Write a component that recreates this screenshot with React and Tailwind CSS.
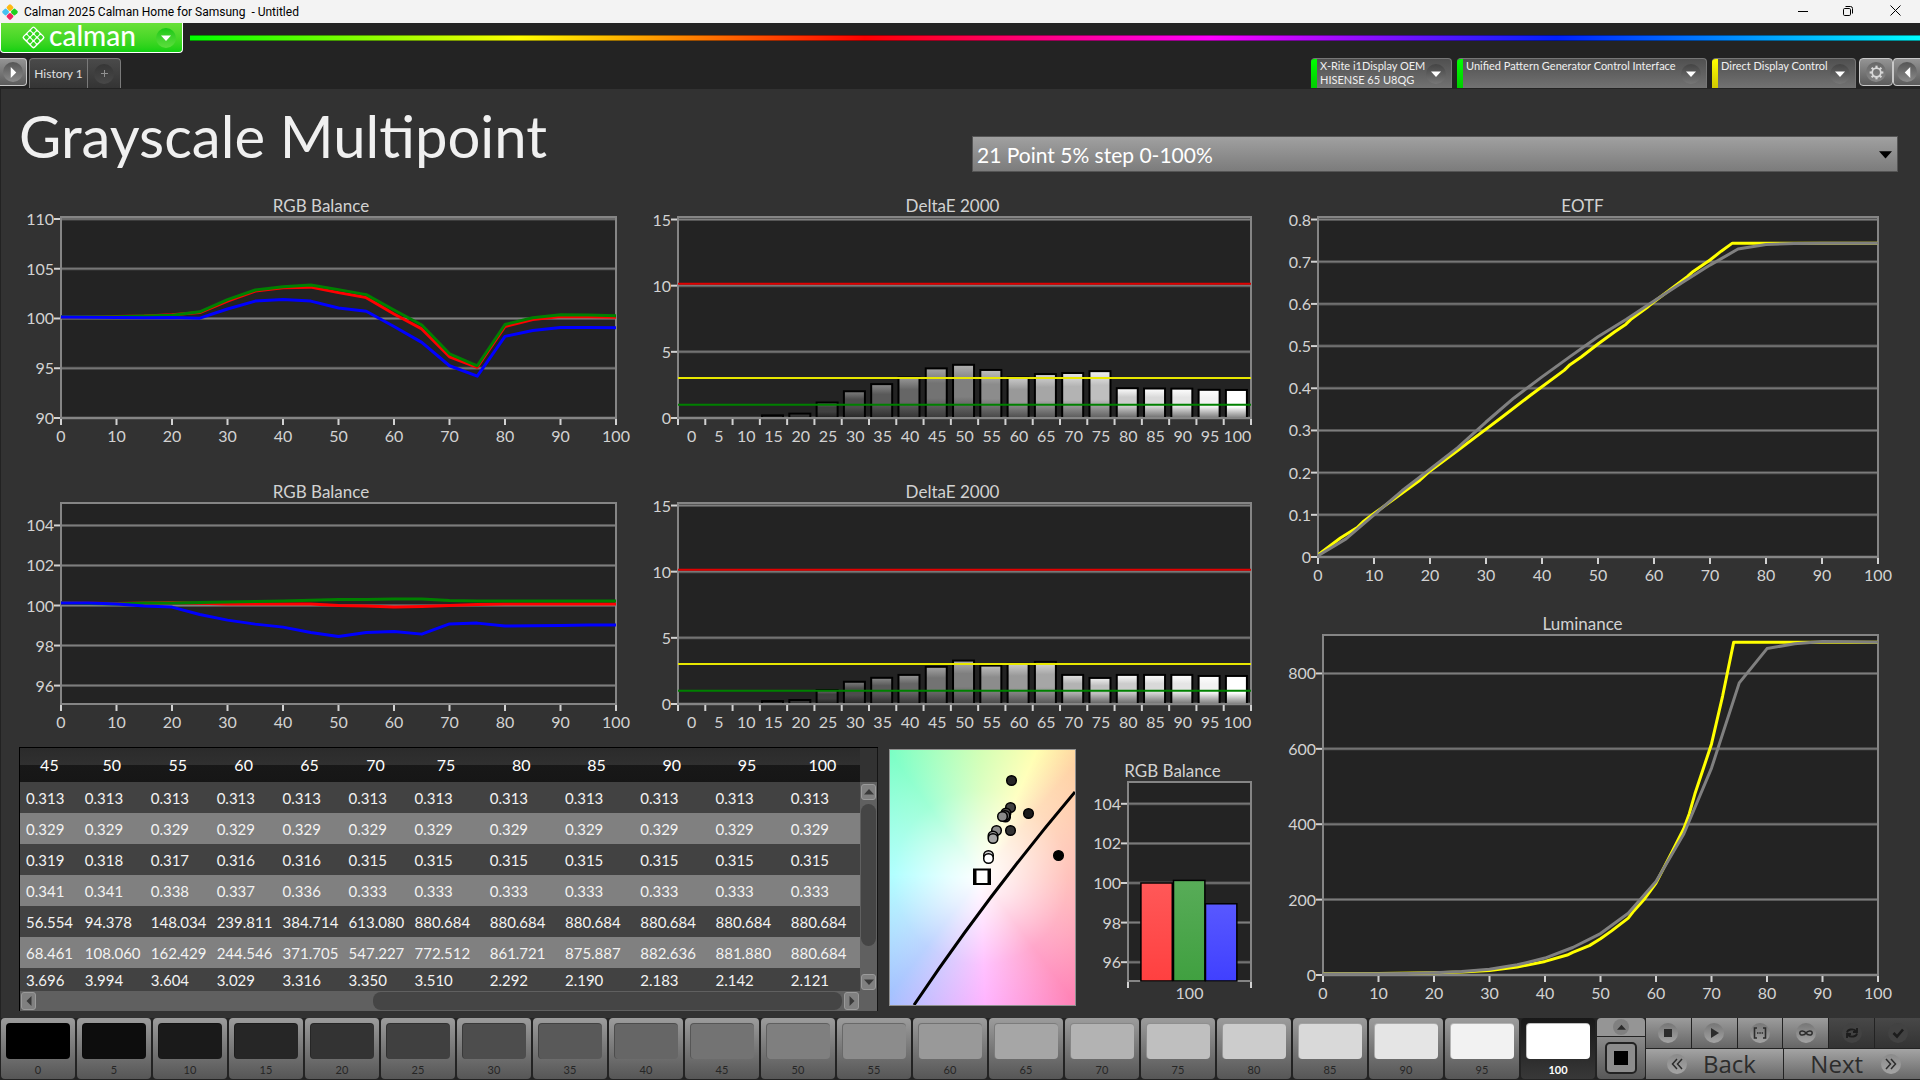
import React from "react";

const STEPS = Array.from({ length: 21 }, (_, i) => i * 5);
const TENS = Array.from({ length: 11 }, (_, i) => i * 10);

/* ---------- chart primitives ---------- */

function ChartFrame({ title, titleClass = "", padClass, plotClass, yTicks, yMin, yMax, xTicks, xLabels, labelY = 24, children }) {
  const py = (v) => `${((yMax - v) / (yMax - yMin)) * 100}%`;
  return (
    <figure className={`flex flex-col ${padClass}`}>
      <figcaption className={`h-5 text-center text-[17px] leading-5 whitespace-nowrap text-[#d2d2d2] ${titleClass}`}>{title}</figcaption>
      <svg className={`mt-px block w-full overflow-visible font-['Lato',sans-serif] text-base ${plotClass}`} role="img" aria-label={title}>
        <rect width="100%" height="100%" fill="#232323" />
        {yTicks.map((t) => (
          <g key={t}>
            <line x1="0" x2="100%" y1={py(t)} y2={py(t)} stroke="#565656" strokeWidth="3" />
            <line x1="0" x2="100%" y1={py(t)} y2={py(t)} stroke="#808080" strokeWidth="1" />
          </g>
        ))}
        <rect width="100%" height="100%" fill="none" stroke="#858585" strokeWidth="2" />
        {children}
        {yTicks.map((t) => (
          <g key={t}>
            <line x1="-7" x2="-1" y1={py(t)} y2={py(t)} stroke="#d2d2d2" strokeWidth="2" />
            <text x="-7" y={py(t)} dy="6" textAnchor="end" fill="#d2d2d2">{t}</text>
          </g>
        ))}
        {xTicks.map((p) => (
          <svg key={p} x={`${p}%`} y="100%" className="overflow-visible">
            <line x1="0" x2="0" y1="1" y2="7" stroke="#d2d2d2" strokeWidth="2" />
          </svg>
        ))}
        {xLabels.map(([p, label]) => (
          <svg key={label} x={`${p}%`} y="100%" className="overflow-visible">
            <text x="0" y={labelY} textAnchor="middle" fill="#d2d2d2">{label}</text>
          </svg>
        ))}
      </svg>
    </figure>
  );
}

function LineChart({ series, yMin, yMax, ...rest }) {
  const points = (pts) => pts.map(([x, y]) => `${x},${((yMax - y) / (yMax - yMin)) * 100}`).join(" ");
  return (
    <ChartFrame {...rest} yMin={yMin} yMax={yMax} xTicks={TENS} xLabels={TENS.map((t) => [t, t])}>
      <svg width="100%" height="100%" viewBox="0 0 100 100" preserveAspectRatio="none">
        {series.map((s) => (
          <polyline key={s.color} points={points(s.data)} fill="none" stroke={s.color} strokeWidth="3" strokeLinejoin="round" vectorEffect="non-scaling-stroke" />
        ))}
      </svg>
    </ChartFrame>
  );
}

function DeltaChart({ id, values }) {
  const yMax = 15.19;
  const cell = 100 / 21;
  const py = (v) => (1 - v / yMax) * 100;
  return (
    <ChartFrame
      title="DeltaE 2000"
      padClass="pl-6"
      titleClass="-ml-6"
      plotClass="h-[201px]"
      yTicks={[15, 10, 5, 0]}
      yMin={0}
      yMax={yMax}
      xTicks={Array.from({ length: 22 }, (_, i) => i * cell)}
      xLabels={STEPS.map((s, i) => [(i + 0.5) * cell, s])}
    >
      <defs>
        {STEPS.map((s) => {
          const g = Math.round(s * 2.55);
          const hi = Math.min(255, g + 50);
          return (
            <linearGradient key={s} id={`${id}-${s}`} x1="0" y1="0" x2="0" y2="1">
              <stop offset="0" stopColor={`rgb(${hi},${hi},${hi})`} />
              <stop offset="0.3" stopColor={`rgb(${g},${g},${g})`} />
              <stop offset="0.6" stopColor={`rgb(${g},${g},${g})`} />
              <stop offset="1" stopColor={`rgb(${g >> 1},${g >> 1},${g >> 1})`} />
            </linearGradient>
          );
        })}
      </defs>
      {values.map((v, i) =>
        v > 0 ? (
          <rect key={STEPS[i]} x={`${(i + 0.08) * cell}%`} y={`${py(v)}%`} width={`${cell * 0.77}%`} height={`${(v / yMax) * 100}%`} fill={`url(#${id}-${STEPS[i]})`} stroke="#000" strokeWidth="2" />
        ) : null
      )}
      <line x1="0" x2="100%" y1="100%" y2="100%" stroke="#858585" strokeWidth="2" />
      {[[10.15, "#e00000"], [3.02, "#e8e800"], [1, "#008000"]].map(([v, c]) => (
        <line key={c} x1="0" x2="100%" y1={`${py(v)}%`} y2={`${py(v)}%`} stroke={c} strokeWidth="2" />
      ))}
    </ChartFrame>
  );
}

function MiniBalance() {
  const yMin = 95.05;
  const yMax = 105.1;
  const bars = [
    ["#ff4040", "#ff5858", 100, 10.5],
    ["#40a040", "#58ac58", 100.13, 37],
    ["#4040ff", "#5858ff", 98.95, 63],
  ];
  return (
    <ChartFrame title="RGB Balance" padClass="w-full pl-[34px]" titleClass="-ml-[34px]" plotClass="h-[199px]" yTicks={[104, 102, 100, 98, 96]} yMin={yMin} yMax={yMax} xTicks={[0, 100]} xLabels={[[50, 100]]} labelY={18}>
      <defs>
        {bars.map(([a, b, v]) => (
          <linearGradient key={a} id={`bar${v}`} x1="0" y1="0" x2="0" y2="1">
            <stop offset="0" stopColor={b} />
            <stop offset="1" stopColor={a} />
          </linearGradient>
        ))}
      </defs>
      {bars.map(([a, b, v, x]) => (
        <rect key={a} x={`${x}%`} y={`${((yMax - v) / (yMax - yMin)) * 100}%`} width="25.5%" height={`${((v - yMin) / (yMax - yMin)) * 100}%`} fill={`url(#bar${v})`} stroke="#000" strokeWidth="1.5" />
      ))}
    </ChartFrame>
  );
}

/* ---------- data ---------- */

const onSteps = (arr) => arr.map((v, i) => [i * 5, v]);

const BALANCE_TOP = [
  { color: "#ff0000", data: onSteps([100.15, 100.17, 100.2, 100.25, 100.38, 100.6, 101.75, 102.75, 103.1, 103.15, 102.6, 102.1, 100.45, 98.95, 96.15, 95.1, 99.2, 99.9, 100.2, 100.18, 100.13]) },
  { color: "#008000", data: onSteps([100.17, 100.17, 100.18, 100.25, 100.33, 100.67, 101.9, 102.86, 103.2, 103.37, 102.9, 102.4, 100.85, 99.35, 96.45, 95.25, 99.4, 100.07, 100.37, 100.34, 100.27]) },
  { color: "#0000ff", data: onSteps([100.15, 100.13, 100.1, 100.08, 100.1, 100.03, 100.95, 101.75, 101.9, 101.75, 101.05, 100.73, 99.2, 97.6, 95.25, 94.2, 98.2, 98.8, 99.1, 99.1, 99.06]) },
];

const BALANCE_BOTTOM = [
  { color: "#ff0000", data: onSteps([100.12, 100.11, 100.1, 100.12, 100.15, 100.11, 100.08, 100.08, 100.07, 100.07, 100, 99.97, 99.93, 99.95, 100, 100.05, 100.07, 100.07, 100.07, 100.07, 100.07]) },
  { color: "#008000", data: onSteps([100.12, 100.1, 100.08, 100.12, 100.12, 100.15, 100.18, 100.2, 100.22, 100.26, 100.3, 100.3, 100.32, 100.32, 100.25, 100.22, 100.22, 100.22, 100.22, 100.22, 100.22]) },
  { color: "#0000ff", data: onSteps([100.12, 100.12, 100.08, 99.98, 99.92, 99.55, 99.27, 99.07, 98.92, 98.65, 98.45, 98.65, 98.7, 98.57, 99.08, 99.12, 98.98, 98.99, 99, 99.03, 99.03]) },
];

const DELTA_TOP = [0, 0, 0, 0.2, 0.33, 1.17, 2.02, 2.56, 3.06, 3.75, 4.02, 3.63, 3.06, 3.32, 3.4, 3.54, 2.25, 2.23, 2.22, 2.13, 2.12];
const DELTA_BOTTOM = [0, 0, 0, 0.22, 0.3, 1.05, 1.68, 1.98, 2.2, 2.81, 3.28, 2.9, 3.04, 3.18, 2.2, 1.97, 2.2, 2.2, 2.2, 2.12, 2.12];

const EOTF = [
  { color: "#ffff00", data: [[0, 0.005], [4, 0.045], [7, 0.07], [8, 0.083], [10, 0.103], [18, 0.18], [20, 0.204], [25, 0.253], [29, 0.293], [33, 0.333], [38, 0.384], [44, 0.443], [45, 0.456], [47, 0.474], [50, 0.505], [53, 0.534], [55, 0.552], [56, 0.565], [59, 0.594], [60, 0.605], [66, 0.665], [67, 0.677], [70, 0.704], [72, 0.725], [74, 0.744], [100, 0.744]] },
  { color: "#808080", data: onSteps([0.003, 0.043, 0.1, 0.157, 0.208, 0.26, 0.32, 0.377, 0.427, 0.475, 0.522, 0.563, 0.607, 0.65, 0.692, 0.73, 0.741, 0.743, 0.744, 0.744, 0.744]) },
];

const LUMINANCE = [
  { color: "#ffff00", data: [[0, 4], [10, 4], [20, 6], [25, 8], [30, 12], [35, 21], [40, 36], [44, 53], [45, 60], [48, 78], [50, 96], [52, 117], [55, 151], [56, 170], [58, 203], [60, 244], [63, 330], [65, 388], [66, 428], [67, 480], [70, 613], [72, 740], [74, 883], [100, 883]] },
  { color: "#808080", data: onSteps([3, 3, 3, 4, 6, 9, 15, 27, 45, 73, 110, 164, 248, 374, 549, 775, 866, 879, 885, 884, 883]) },
];

const TABLE_HEAD = [45, 50, 55, 60, 65, 70, 75, 80, 85, 90, 95, 100];
const TABLE_ROWS = [
  Array(12).fill("0.313"),
  Array(12).fill("0.329"),
  ["0.319", "0.318", "0.317", "0.316", "0.316", "0.315", "0.315", "0.315", "0.315", "0.315", "0.315", "0.315"],
  ["0.341", "0.341", "0.338", "0.337", "0.336", "0.333", "0.333", "0.333", "0.333", "0.333", "0.333", "0.333"],
  ["56.554", "94.378", "148.034", "239.811", "384.714", "613.080", "880.684", "880.684", "880.684", "880.684", "880.684", "880.684"],
  ["68.461", "108.060", "162.429", "244.546", "371.705", "547.227", "772.512", "861.721", "875.887", "882.636", "881.880", "880.684"],
  ["3.696", "3.994", "3.604", "3.029", "3.316", "3.350", "3.510", "2.292", "2.190", "2.183", "2.142", "2.121"],
];

/* ---------- small pieces ---------- */

function Triangle({ dir, className = "", size = 10 }) {
  const d = { down: "M0 2.5h10L5 8z", up: "M0 7.5h10L5 2z", left: "M7.5 0v10L2.5 5z", right: "M2.5 0v10L7.5 5z" }[dir];
  return (
    <svg width={size} height={size} viewBox="0 0 10 10" className={className} aria-hidden="true">
      <path d={d} fill="currentColor" />
    </svg>
  );
}

function Knob({ children, className = "" }) {
  return <span className={`flex size-5 shrink-0 items-center justify-center rounded-full ${className}`}>{children}</span>;
}

function TitleBar() {
  return (
    <div className="flex h-[23px] items-center bg-[#f3f3f3] text-black">
      <svg width="16" height="16" viewBox="0 0 16 16" className="ml-0.5" aria-hidden="true">
        <rect x="5.2" y="0.8" width="5.6" height="5.6" rx="1.6" transform="rotate(45 8 3.6)" fill="#fdb913" />
        <rect x="0.8" y="5.2" width="5.6" height="5.6" rx="1.6" transform="rotate(45 3.6 8)" fill="#45c1f0" />
        <rect x="9.6" y="5.2" width="5.6" height="5.6" rx="1.6" transform="rotate(45 12.4 8)" fill="#1fd11f" />
        <rect x="5.2" y="9.6" width="5.6" height="5.6" rx="1.6" transform="rotate(45 8 12.4)" fill="#f0245f" />
      </svg>
      <span className="ml-1.5 whitespace-pre font-['Roboto',sans-serif] text-xs">Calman 2025 Calman Home for Samsung  - Untitled</span>
      <div className="ml-auto flex h-full">
        <button aria-label="Minimize" className="flex w-[45px] items-center justify-center">
          <svg width="10" height="10" viewBox="0 0 10 10"><path d="M0 4.5h10" stroke="#000" /></svg>
        </button>
        <button aria-label="Restore" className="flex w-[45px] items-center justify-center pb-0.5">
          <svg width="10" height="10" viewBox="0 0 10 10" fill="none" stroke="#000"><rect x="0.5" y="2.5" width="7" height="7" rx="1.2" /><path d="M2.5 0.5h5a2 2 0 0 1 2 2v5" /></svg>
        </button>
        <button aria-label="Close" className="flex w-[50px] items-center justify-center pb-0.5">
          <svg width="11" height="11" viewBox="0 0 11 11"><path d="M0.5 0.5l10 10M10.5 0.5l-10 10" stroke="#000" /></svg>
        </button>
      </div>
    </div>
  );
}

function LogoRow() {
  return (
    <div className="flex h-[30px] items-start">
      <button className="flex h-[30px] w-[183px] items-center rounded-b-[4px] border border-t-0 border-white bg-linear-to-b from-[#68e038] to-[#0cd010] text-white">
        <svg width="25" height="25" viewBox="0 0 24 24" className="ml-5" aria-hidden="true">
          <rect x="4" y="4" width="16" height="16" rx="2" transform="rotate(45 12 12)" fill="#fff" />
          <g fill="#35d620" transform="rotate(45 12 12)">
            {[5.2, 10, 14.8].map((x) => [5.2, 10, 14.8].map((y) => <rect key={`${x}-${y}`} x={x} y={y} width="3.8" height="3.8" rx="1" />))}
          </g>
        </svg>
        <span className="ml-[3px] pb-1.5 font-['Lato',sans-serif] text-[28px] leading-6 font-medium">calman</span>
        <Knob className="mr-1.5 ml-auto bg-linear-to-b from-[#14c814] to-[#5ade3c]"><Triangle dir="down" /></Knob>
      </button>
      <div className="mt-3 ml-[7px] h-1.5 flex-1 border-y border-black/40 bg-[linear-gradient(to_right,#00ff00,#ffff00_19%,#ff0000_39%,#ff00ff_59%,#0020ff_79%,#00ffff)]" />
    </div>
  );
}

function DevicePill({ barClass, widthClass, lines }) {
  return (
    <button className={`flex h-[30px] shrink-0 items-start overflow-hidden rounded-t-[4px] border-t border-r border-[#777] bg-linear-to-b from-[#505050] to-[#727272] text-left text-[#f0f0f0] ${widthClass}`}>
      <span className={`h-full w-1.5 shrink-0 ${barClass}`} />
      <span className="ml-[3px] flex-1 font-['Lato',sans-serif] text-[11px] leading-[14px] whitespace-nowrap">
        {lines.map((l) => <span key={l} className="block">{l}</span>)}
      </span>
      <Knob className="mt-[5px] mr-[5px] -ml-6 bg-linear-to-b from-[#444] to-[#777] text-white"><Triangle dir="down" /></Knob>
    </button>
  );
}

const SIDE_BTN = "flex h-7 shrink-0 items-center justify-center border border-[#c8c8c8] bg-linear-to-b from-[#949494] to-[#5c5c5c] text-white";

function TabRow() {
  return (
    <div className="mt-[5px] flex h-[31px] items-start">
      <button aria-label="Expand" className={`${SIDE_BTN} w-[27px] rounded-r-[4px] border-l-0`}>
        <Knob className="bg-linear-to-b from-[#555] to-[#8c8c8c]"><Triangle dir="right" size={11} /></Knob>
      </button>
      <div className="ml-0.5 flex h-[30px] overflow-hidden rounded-t-[4px] border border-b-0 border-[#7a7a7a] bg-linear-to-b from-[#4a4a4a] to-[#343434]">
        <button className="w-[58px] border-r border-[#7a7a7a] text-xs whitespace-nowrap text-[#e0e0e0]">History 1</button>
        <button aria-label="Add history" className="flex w-8 items-center justify-center">
          <Knob className="bg-linear-to-b from-[#363636] to-[#484848] text-[#909090]">
            <svg width="7" height="7" viewBox="0 0 7 7"><path d="M3.5 0v7M0 3.5h7" stroke="currentColor" /></svg>
          </Knob>
        </button>
      </div>
      <div className="ml-auto flex gap-[5px]">
        <DevicePill barClass="bg-linear-to-b from-[#00ff00] to-[#00cc00]" widthClass="w-[141px]" lines={["X-Rite i1Display OEM", "HISENSE 65 U8QG"]} />
        <DevicePill barClass="bg-linear-to-b from-[#00ff00] to-[#00cc00]" widthClass="w-[250px]" lines={["Unified Pattern Generator Control Interface"]} />
        <DevicePill barClass="bg-linear-to-b from-[#ffff00] to-[#d0c800]" widthClass="w-[144px]" lines={["Direct Display Control"]} />
      </div>
      <button aria-label="Settings" className={`${SIDE_BTN} ml-[3px] w-[34px] rounded-[4px]`}>
        <Knob className="bg-linear-to-b from-[#666] to-[#888] text-[#d8d8d8]">
          <svg width="15" height="15" viewBox="0 0 14 14" fill="none" stroke="currentColor">
            <circle cx="7" cy="7" r="4" strokeWidth="1.6" />
            {[0, 45, 90, 135, 180, 225, 270, 315].map((a) => <path key={a} d="M7 0.6v2.2" strokeWidth="2" transform={`rotate(${a} 7 7)`} />)}
          </svg>
        </Knob>
      </button>
      <button aria-label="Collapse" className={`${SIDE_BTN} w-[27px] rounded-l-[4px] border-r-0`}>
        <Knob className="bg-linear-to-b from-[#555] to-[#8c8c8c]"><Triangle dir="left" size={11} /></Knob>
      </button>
    </div>
  );
}

const SCROLL_BTN = "flex items-center justify-center rounded-[3px] border border-[#9a9a9a] bg-[#808080] text-[#3a3a3a]";

function DataTable() {
  return (
    <div className="grid min-w-0 flex-1 grid-cols-[1fr_18px] border-t border-l border-black">
      <div className="h-[243px] overflow-hidden">
        <table className="w-full table-fixed border-collapse text-base">
          <colgroup>
            <col className="w-[7%]" />
            {[0, 1, 2, 3, 4].map((i) => <col key={i} className="w-[7.85%]" />)}
            {[0, 1, 2, 3, 4, 5].map((i) => <col key={i} />)}
          </colgroup>
          <thead>
            <tr className="h-[34px] bg-[linear-gradient(to_bottom,#2b2b2b,#303030_50%,#181818_50%,#161616)] text-white">
              {TABLE_HEAD.map((h) => <th key={h} scope="col" className="p-0 text-center font-normal">{h}</th>)}
            </tr>
          </thead>
          <tbody>
            {TABLE_ROWS.map((row, r) => (
              <tr key={r} className="h-[31px] text-[#f2f2f2] odd:bg-[#424242] even:bg-[#808080] last:h-[23px]">
                {row.map((c, i) => <td key={i} className="p-0 pt-px pl-[6px] text-[15px] leading-[18px] whitespace-nowrap">{c}</td>)}
              </tr>
            ))}
          </tbody>
        </table>
      </div>
      <div className="flex flex-col border-r border-[#151515] pt-[34px]">
        <div className="flex flex-1 flex-col bg-[#606060] px-px pt-0.5 pb-px">
          <button aria-label="Scroll up" className={`${SCROLL_BTN} h-4`}><Triangle dir="up" /></button>
          <div className="mt-1 h-[142px] rounded-full bg-[#454545]" />
          <button aria-label="Scroll down" className={`${SCROLL_BTN} mt-auto h-4`}><Triangle dir="down" /></button>
        </div>
      </div>
      <div className="flex h-5 bg-[#606060] p-px">
        <button aria-label="Scroll left" className={`${SCROLL_BTN} w-[15px]`}><Triangle dir="left" /></button>
        <div className="mr-0.5 ml-auto w-[56%] rounded-lg bg-[#454545]" />
        <button aria-label="Scroll right" className={`${SCROLL_BTN} w-[15px]`}><Triangle dir="right" /></button>
      </div>
      <div className="border-r border-[#151515] bg-[#606060]" />
    </div>
  );
}

function ChromaChart() {
  const dots = [
    [169.5, 106.5, "#000"], [139.5, 64.5, "#1a1a1a"], [122.5, 31.5, "#262626"], [121.5, 81.5, "#333"], [121.5, 58.5, "#404040"],
    [117, 64, "#4a4a4a"], [116.5, 68, "#5a5a5a"], [116, 66.5, "#666"], [113.5, 67.5, "#8a8a8a"], [107.5, 81.5, "#8c8c8c"],
    [104, 87, "#999"], [104, 89.5, "#a6a6a6"], [99.5, 106.5, "#d0d0d0"], [99.5, 109.5, "#fff"],
  ];
  return (
    <div className="mt-0.5 ml-[11px] h-[257px] w-[187px] shrink-0 border border-[#909090] bg-[radial-gradient(circle_at_49%_50%,#fff_0%,rgba(255,255,255,0.75)_22%,rgba(255,255,255,0.3)_55%,transparent_100%),conic-gradient(from_0deg_at_49%_50%,#ccffaa_0deg,#ffffaa_24deg,#ffd0a0_40deg,#ffa8a0_90deg,#ff80b4_143deg,#ffa8ff_178deg,#a0c0ff_218deg,#90ffff_272deg,#78ffc4_324deg,#ccffaa_360deg)]">
      <svg viewBox="0 0 185 255" preserveAspectRatio="none" className="block size-full" role="img" aria-label="Chromaticity">
        <path d="M24 255Q98 145 185 42" fill="none" stroke="#000" strokeWidth="3" />
        {dots.map(([x, y, c]) => <circle key={`${x}-${y}`} cx={x - 1} cy={y - 1} r="4.8" fill={c} stroke="#000" strokeWidth="1.5" />)}
        <path d="M83 118.500h18v16.500h-18z" fill="#000" />
        <path d="M86.500 120.500h11v12.500h-11z" fill="#fff" />
      </svg>
    </div>
  );
}

function Swatch({ level, active }) {
  const g = Math.round(level * 2.55);
  return (
    <button
      className={`flex h-[61px] min-w-0 flex-1 flex-col items-center rounded-[4px] px-1 pt-[5px] ${
        active ? "bg-linear-to-b from-[#181818] to-[#383838] font-bold text-white" : "bg-linear-to-b from-[#9c9c9c] to-[#565656] text-[#262626]"
      }`}
    >
      <span className="h-9 w-full max-w-16 rounded-[4px] border-t border-l border-black/25" style={{ backgroundColor: `rgb(${g},${g},${g})` }} />
      <span className="mt-1 text-[11px] leading-[14px]">{level}</span>
    </button>
  );
}

const TRANSPORT = [
  ["Stop", <path key="p" d="M3 3h8v8H3z" fill="currentColor" />],
  ["Play", <path key="p" d="M4 2l8 5-8 5z" fill="currentColor" />],
  ["Read series", <path key="p" d="M4 2H1.500v10H4M10 2h2.500v10H10M4 7h1.500M6.300 7h1.500M8.600 7h1.500" stroke="currentColor" strokeWidth="1.600" fill="none" />],
  ["Continuous", <path key="p" d="M7 7C5.500 4.500 0.800 4 0.800 7S5.500 9.500 7 7s6.200-3 6.200 0S8.500 9.500 7 7z" stroke="currentColor" strokeWidth="1.500" fill="none" />],
  ["Refresh", <path key="p" d="M2 6.500C2.500 3.500 8 2 11 5M12 2v4H8M12 7.500C11.500 10.500 6 12 3 9M2 12V8h4" stroke="currentColor" strokeWidth="1.800" fill="none" />],
  ["Accept", <path key="p" d="M2.500 7l3.500 3.500L12 3.500" stroke="currentColor" strokeWidth="2.600" fill="none" />],
];

function Chevrons({ flip }) {
  return (
    <svg width="12" height="12" viewBox="0 0 12 12" className={flip ? "rotate-180" : ""} aria-hidden="true">
      <path d="M6 1L1.500 6 6 11M11 1L6.500 6 11 11" fill="none" stroke="#2c2c2c" strokeWidth="1.500" />
    </svg>
  );
}

function BottomBar() {
  const half = "flex h-[30px] flex-1 items-center bg-linear-to-b from-[#a4a4a4] to-[#686868] font-['Open_Sans',sans-serif] text-[24px] leading-[30px] font-medium text-[#2c2c2c]";
  return (
    <footer className="flex bg-[#232323] pb-px pl-px">
      <div className="flex min-w-0 flex-1 gap-0.5">
        {STEPS.map((s) => <Swatch key={s} level={s} active={s === 100} />)}
      </div>
      <div className="ml-0.5 flex w-12 shrink-0 flex-col gap-px">
        <button aria-label="Show options" className="flex h-[18px] items-center justify-center rounded-t-[4px] bg-[#959595]">
          <span className="flex size-4 items-center justify-center rounded-full bg-[#808080] text-[#2c2c2c]"><Triangle dir="up" size={9} /></span>
        </button>
        <button aria-label="Pattern window" className="flex flex-1 items-center justify-center rounded-b-[4px] bg-linear-to-b from-[#8a8a8a] to-[#585858]">
          <span className="flex size-8 items-center justify-center rounded-[5px] border-2 border-[#222] bg-[#8c8c8c]">
            <span className="size-3.5 bg-black" />
          </span>
        </button>
      </div>
      <div className="ml-px flex w-[274px] shrink-0 flex-col gap-px">
        <div className="flex gap-px">
          {TRANSPORT.map(([name, icon], i) => (
            <button key={name} aria-label={name} disabled={i > 3} className={`flex h-[30px] flex-1 items-center justify-center ${i > 3 ? "bg-linear-to-b from-[#484848] to-[#333] text-[#1c1c1c]" : "bg-linear-to-b from-[#9c9c9c] to-[#666] text-[#2c2c2c]"}`}>
              <Knob className={i > 3 ? "bg-[#424242]" : "bg-linear-to-b from-[#767676] to-[#a4a4a4]"}>
                <svg width="14" height="14" viewBox="0 0 14 14">{icon}</svg>
              </Knob>
            </button>
          ))}
        </div>
        <div className="flex gap-px">
          <button className={half}>
            <Knob className="ml-[21px] bg-linear-to-b from-[#8a8a8a] to-[#a4a4a4]"><Chevrons /></Knob>
            <span className="ml-4">Back</span>
          </button>
          <button className={`${half} justify-end`}>
            <span className="mr-[18px]">Next</span>
            <Knob className="mr-[19px] bg-linear-to-b from-[#8a8a8a] to-[#a4a4a4]"><Chevrons flip /></Knob>
          </button>
        </div>
      </div>
    </footer>
  );
}

export default function App() {
  return (
    <div className="flex min-h-screen flex-col bg-[#232323] font-['Lato',sans-serif] text-[#d2d2d2]">
      <TitleBar />
      <LogoRow />
      <TabRow />
      <main className="flex-1 border-l border-[#222] bg-[#323232] pr-[42px] pl-[18px]">
        <div className="-mr-5 flex h-[107px] items-start">
          <h1 className="mt-[11px] flex-1 text-[58px] leading-[72px] whitespace-nowrap text-[#f0f0f0]">Grayscale Multipoint</h1>
          <div className="relative mt-[47px] w-1/2 max-w-[926px] text-black">
            <select aria-label="Step pattern" className="h-9 w-full appearance-none border border-[#555] bg-linear-to-b from-[#a0a0a0] to-[#7c7c7c] pt-0.5 pl-1 text-[21px] text-white">
              <option>21 Point 5% step 0-100%</option>
            </select>
            <Triangle dir="down" size={13} className="pointer-events-none absolute top-3 right-1.5" />
          </div>
        </div>
        <div className="grid grid-cols-[1232fr_591fr] gap-9">
          <div className="min-w-0">
            <div className="grid grid-cols-[590fr_597fr] gap-x-[38px] gap-y-16 pl-[7px]">
              <LineChart title="RGB Balance" padClass="pl-[35px]" titleClass="-ml-[35px]" plotClass="h-[201px]" yTicks={[110, 105, 100, 95, 90]} yMin={90} yMax={110.2} series={BALANCE_TOP} />
              <DeltaChart id="dt" values={DELTA_TOP} />
              <LineChart title="RGB Balance" padClass="pl-[35px]" titleClass="-ml-[35px]" plotClass="h-[201px]" yTicks={[104, 102, 100, 98, 96]} yMin={95.08} yMax={105.12} series={BALANCE_BOTTOM} />
              <DeltaChart id="db" values={DELTA_BOTTOM} />
            </div>
            <div className="mt-[43px] flex">
              <DataTable />
              <ChromaChart />
              <div className="mt-3.5 ml-[18px] w-[157px] shrink-0"><MiniBalance /></div>
            </div>
          </div>
          <div className="flex min-w-0 flex-col gap-[57px]">
            <LineChart title="EOTF" padClass="pl-[31px]" titleClass="-ml-[31px]" plotClass="h-[340px]" yTicks={[0.8, 0.7, 0.6, 0.5, 0.4, 0.3, 0.2, 0.1, 0]} yMin={0} yMax={0.806} series={EOTF} />
            <LineChart title="Luminance" padClass="pl-9" titleClass="-ml-9" plotClass="h-[340px]" yTicks={[800, 600, 400, 200, 0]} yMin={0} yMax={902} series={LUMINANCE} />
          </div>
        </div>
      </main>
      <BottomBar />
    </div>
  );
}
